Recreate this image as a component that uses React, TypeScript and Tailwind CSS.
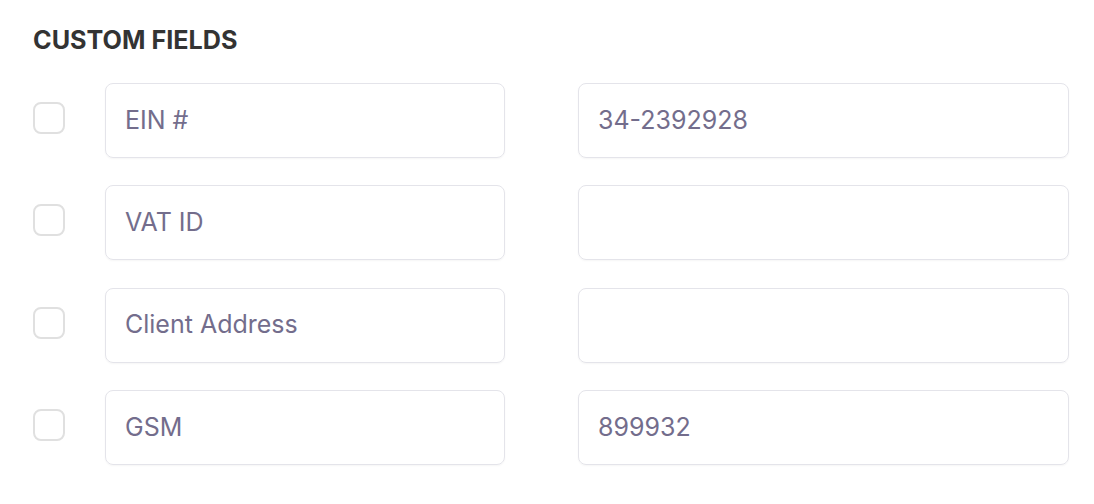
const rows = [
  { label: "EIN #", value: "34-2392928" },
  { label: "VAT ID", value: "" },
  { label: "Client Address", value: "" },
  { label: "GSM", value: "899932" },
];

export default function App() {
  return (
    <div className="w-[1094px] h-[504px] bg-white pl-[33px] pt-[25px] font-['Inter',sans-serif]">
      <h2 className="text-[25.2px] leading-[30px] font-bold text-[#333333]">CUSTOM FIELDS</h2>
      <div className="mt-[28px] flex flex-col gap-[27.3px]">
        {rows.map((r) => (
          <div key={r.label} className="flex items-start">
            <div className="mt-[19px] w-[32px] h-[32px] rounded-[8px] border-[2.5px] border-[#e0e0e0] bg-white shrink-0" />
            <div className="ml-[40px] w-[400px] h-[75px] rounded-[8px] border border-[#e4e4ea] shadow-[0_1px_2px_rgba(0,0,0,0.04)] flex items-center px-[19px] text-[25px] text-[#736d8c]">
              {r.label}
            </div>
            <div className="ml-[73px] w-[491px] h-[75px] rounded-[8px] border border-[#e4e4ea] shadow-[0_1px_2px_rgba(0,0,0,0.04)] flex items-center px-[19px] text-[25px] text-[#736d8c]">
              {r.value}
            </div>
          </div>
        ))}
      </div>
    </div>
  );
}
